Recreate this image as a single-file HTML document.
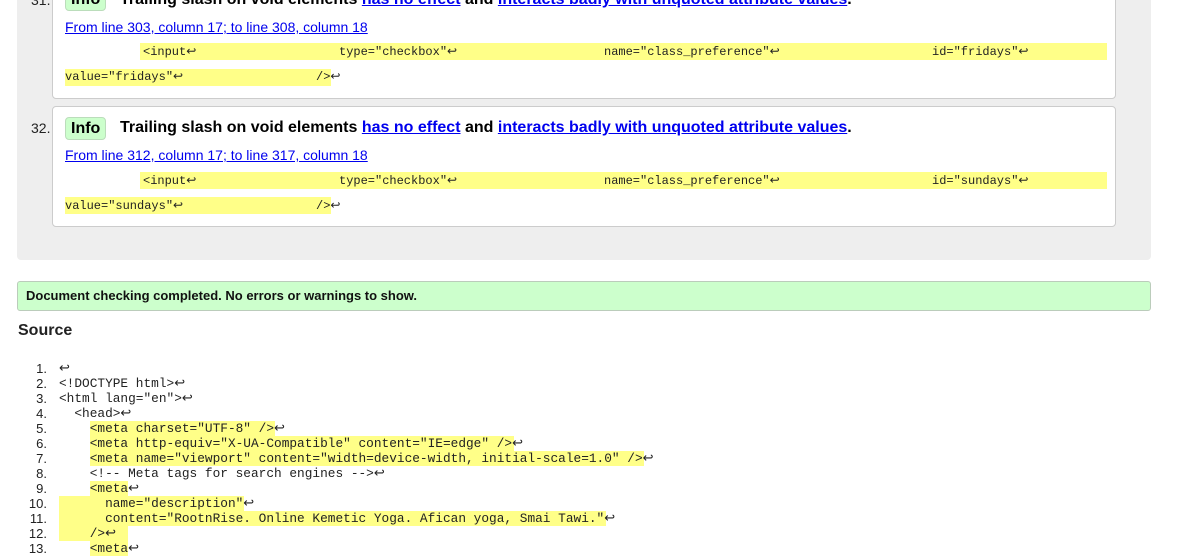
<!DOCTYPE html>
<html><head><style>
body{margin:0;width:1182px;height:547px;overflow:hidden;background:#fff;font-family:"Liberation Sans",sans-serif;position:relative}
.a{position:absolute;white-space:pre}
.gray{position:absolute;left:17px;top:-10px;width:1134px;height:270px;background:#eee;border-radius:0 0 4px 4px}
.box{position:absolute;left:52px;width:1062px;background:#fff;border:1px solid #ccc;border-radius:4px}
.num{font-size:14px;color:#222}
.badge{position:absolute;background:#cfc;border:1px solid #bdb;border-radius:4px;font-weight:bold;font-size:16px;padding:1px 5px;height:19px;line-height:19px}
.t{font-size:16px;font-weight:bold;color:#000}
.t a{color:#00e;text-decoration:underline}
.lk{font-size:14px;color:#00e;text-decoration:underline}
.m{font-family:"Liberation Mono",monospace;font-size:12px;color:#222}
.y{position:absolute;background:#ff8;height:17px}
.src{font-family:"Liberation Mono",monospace;font-size:12.8px;color:#222;line-height:15px}
.ln{position:absolute;width:47px;text-align:right;font-family:"Liberation Sans",sans-serif;font-size:13px;color:#222}
</style></head><body>
<div class="gray"></div>
<div class="box" style="top:-20px;height:117px"></div>
<div class="a num" style="left:31px;top:-8px">31.</div>
<div class="badge" style="left:65px;top:-12px">Info</div>
<div class="a t" style="left:120px;top:-9px">Trailing slash on void elements <a>has no effect</a> and <a>interacts badly with unquoted attribute values</a>.</div>
<div class="a lk" style="left:65px;top:19px">From line 303, column 17; to line 308, column 18</div>
<div class="y" style="left:140px;top:43px;width:967px"></div>
<div class="y" style="left:65px;top:69px;width:266px"></div>
<div class="a m" style="left:143px;top:44px">&lt;input↩</div>
<div class="a m" style="left:339px;top:44px">type="checkbox"↩</div>
<div class="a m" style="left:604px;top:44px">name="class_preference"↩</div>
<div class="a m" style="left:932px;top:44px">id="fridays"↩</div>
<div class="a m" style="left:65px;top:69px">value="fridays"↩</div>
<div class="a m" style="left:316px;top:69px">/&gt;↩</div>

<div class="box" style="top:106px;height:119px"></div>
<div class="a num" style="left:31px;top:120px">32.</div>
<div class="badge" style="left:65px;top:117px">Info</div>
<div class="a t" style="left:120px;top:119px">Trailing slash on void elements <a>has no effect</a> and <a>interacts badly with unquoted attribute values</a>.</div>
<div class="a lk" style="left:65px;top:147px">From line 312, column 17; to line 317, column 18</div>
<div class="y" style="left:140px;top:172px;width:967px"></div>
<div class="y" style="left:65px;top:197px;width:266px"></div>
<div class="a m" style="left:143px;top:173px">&lt;input↩</div>
<div class="a m" style="left:339px;top:173px">type="checkbox"↩</div>
<div class="a m" style="left:604px;top:173px">name="class_preference"↩</div>
<div class="a m" style="left:932px;top:173px">id="sundays"↩</div>
<div class="a m" style="left:65px;top:198px">value="sundays"↩</div>
<div class="a m" style="left:316px;top:198px">/&gt;↩</div>

<div style="position:absolute;left:17px;top:281px;width:1132px;height:28px;background:#cfc;border:1px solid #bcb;border-radius:3px"></div>
<div class="a" style="left:26px;top:288px;font-size:13px;font-weight:bold;color:#111">Document checking completed. No errors or warnings to show.</div>
<div class="a" style="left:18px;top:322px;font-size:16px;font-weight:bold;color:#222">Source</div>

<div class="y" style="left:90px;top:421px;width:185px;height:15px"></div>
<div class="y" style="left:90px;top:436px;width:424px;height:15px"></div>
<div class="y" style="left:90px;top:451px;width:554px;height:15px"></div>
<div class="y" style="left:90px;top:481px;width:38px;height:15px"></div>
<div class="y" style="left:59px;top:496px;width:185px;height:15px"></div>
<div class="y" style="left:59px;top:511px;width:547px;height:15px"></div>
<div class="y" style="left:59px;top:526px;width:69px;height:15px"></div>
<div class="y" style="left:90px;top:541px;width:38px;height:15px"></div>
<div class="a src" style="left:0;top:361px">
<span class="ln" style="left:0;top:0">1.</span><span class="ln" style="left:0;top:15px">2.</span><span class="ln" style="left:0;top:30px">3.</span><span class="ln" style="left:0;top:45px">4.</span><span class="ln" style="left:0;top:60px">5.</span><span class="ln" style="left:0;top:75px">6.</span><span class="ln" style="left:0;top:90px">7.</span><span class="ln" style="left:0;top:105px">8.</span><span class="ln" style="left:0;top:120px">9.</span><span class="ln" style="left:0;top:135px">10.</span><span class="ln" style="left:0;top:150px">11.</span><span class="ln" style="left:0;top:165px">12.</span><span class="ln" style="left:0;top:180px">13.</span>
</div>
<div class="a src" style="left:59px;top:361px">↩
&lt;!DOCTYPE html&gt;↩
&lt;html lang="en"&gt;↩
  &lt;head&gt;↩
    &lt;meta charset="UTF-8" /&gt;↩
    &lt;meta http-equiv="X-UA-Compatible" content="IE=edge" /&gt;↩
    &lt;meta name="viewport" content="width=device-width, initial-scale=1.0" /&gt;↩
    &lt;!-- Meta tags for search engines --&gt;↩
    &lt;meta↩
      name="description"↩
      content="RootnRise. Online Kemetic Yoga. Afican yoga, Smai Tawi."↩
    /&gt;↩
    &lt;meta↩</div>
</body></html>
